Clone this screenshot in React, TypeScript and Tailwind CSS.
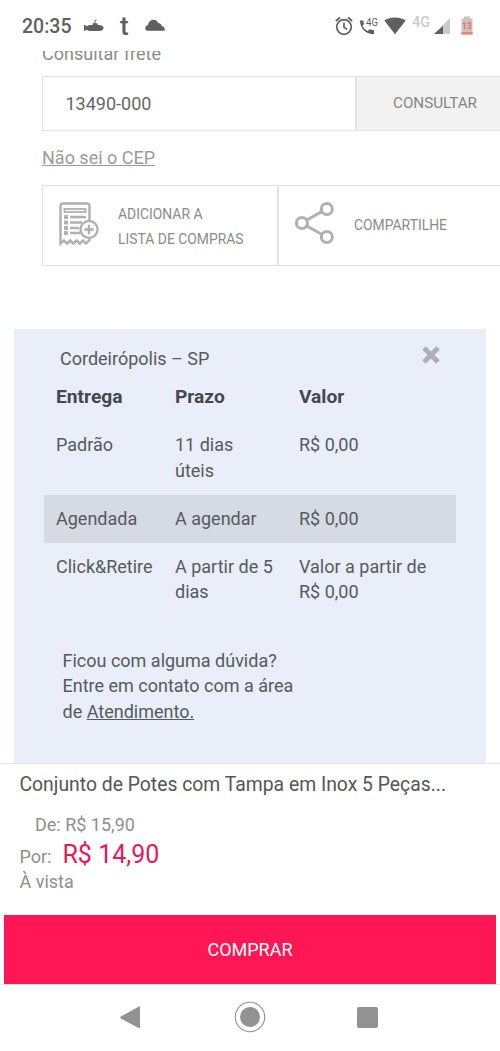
import type { ReactNode } from 'react';

interface ShippingOption {
  name: string;
  term: string;
  price: string;
  highlighted?: boolean;
}

const SHIPPING_OPTIONS: ShippingOption[] = [
  { name: 'Padrão', term: '11 dias úteis', price: 'R$ 0,00' },
  { name: 'Agendada', term: 'A agendar', price: 'R$ 0,00', highlighted: true },
  { name: 'Click&Retire', term: 'A partir de 5 dias', price: 'Valor a partir de R$ 0,00' },
];

function StatusBar() {
  return (
    <div className="flex h-[51px] shrink-0 items-center bg-white text-[#5f5f5f]">
      <span className="ml-[22px] mt-[3px] w-[62px] text-[19.5px] leading-none font-medium">20:35</span>

      {/* submarine */}
      <svg className="h-4 w-5" viewBox="0 0 20 16" fill="currentColor">
        <path d="M0 7h1.200l1.300 1.300C3.600 7.300 5.500 7 8.600 7V5.200h1.800L10.600 2.400l1.900-.9v1.100l-1 .6L11.400 5.200h2.100V7c4.200 0 6 1 6 2.900s-1.600 3-5.400 3H8c-2.800 0-4.500-.5-5.500-1.500L1.200 12.700H0z" />
      </svg>
      <span className="ml-[16px] mt-px w-[11px] text-[26px] leading-none font-medium">t</span>
      <svg className="ml-[14px] h-4 w-5" viewBox="0 0 20 16" fill="currentColor">
        <path d="M2.800 12.800C1.100 12.800.2 11.600.2 10.200S1.400 7.500 3 7.100C3.500 4 5.700 1.800 8.400 1.800c2.300 0 4 1.100 4.800 3.200 2 .2 3.100 1.200 3.600 3 1.700.5 2.900 1.500 2.900 2.900v1.900z" />
      </svg>

      <div className="ml-auto flex h-full items-center">
        {/* alarm */}
        <svg className="h-5 w-[18px]" viewBox="0 0 18 20" fill="none" stroke="currentColor" strokeWidth="1.700">
          <circle cx="9" cy="11" r="7.300" />
          <path d="M9 6.800V11.200l3.200 2.200M.8 5l4.200-3.500M17.200 5L13 1.500" />
        </svg>
        {/* call over 4G */}
        <svg className="ml-[6px] h-5 w-[20px]" viewBox="0 0 20 20" fill="currentColor">
          <path d="M1 4.600h3.300c.2 1.300.4 2.400.7 3.300L3.500 9.800c1.200 2.400 2.800 4 5.200 5.200l1.900-1.700c1 .4 2.700.7 4.400.8v4C6.500 18.600 1 12 1 4.600z" />
          <text
            x="7"
            y="10.400"
            textLength="12"
            lengthAdjust="spacingAndGlyphs"
            fontFamily="Roboto, sans-serif"
            fontSize="11.500"
          >
            4G
          </text>
        </svg>
        <svg className="ml-[5px] h-5 w-[22px]" viewBox="0 0 22 20" fill="currentColor">
          <path d="M.3 4.600C6.500.3 15.500.3 21.700 4.600L11 18.200z" />
        </svg>
        <span className="ml-[6px] mb-[4px] w-[20px] text-[14.500px] leading-none font-medium text-[#cbcbcb]">4G</span>
        <svg className="ml-[2px] h-[18px] w-[16px]" viewBox="0 0 16 18">
          <path d="M16 1v16H0z" fill="#cacaca" />
          <path d="M9 9v8H0z" fill="#5f5f5f" />
        </svg>
        <svg className="ml-[11px] mr-[27px] h-[19px] w-[12px]" viewBox="0 0 12 19">
          <path d="M3 .5h6v2h2.500v16H.5v-16H3z" fill="#cbc4c0" />
          <path d="M.5 16h11v2.500H.5z" fill="#ee8371" />
          <text
            x="6"
            y="12.800"
            textAnchor="middle"
            fontFamily="Roboto, sans-serif"
            fontSize="8.500"
            fontWeight="700"
            fill="#ee705d"
          >
            13
          </text>
        </svg>
      </div>
    </div>
  );
}

function ShoppingListIcon() {
  return (
    <svg className="mb-[4px] h-[44px] w-[40px] shrink-0" viewBox="0 0 40 44" fill="none" stroke="#b0b0b0" strokeWidth="2.400">
      <path d="M30.500 18V4q0-2.500-2.500-2.500H4Q1.500 1.500 1.500 4v37.500l3.500-3 3 3 3.200-3 3.200 3 3.200-3 3.200 3 3.200-3 3 3 3.500-3.500v-2" />
      <rect x="5.500" y="7" width="21" height="3" strokeWidth="1.800" />
      <path d="M11 15h16M11 20.500h12M11 26h9M11 31h10" />
      <path d="M5 15h4M5 20.500h4M5 26h4M5 31h4" strokeWidth="4" />
      <circle cx="30" cy="27.500" r="8.500" fill="#fff" />
      <path d="M30 22.800v9.400M25.300 27.500h9.400" />
    </svg>
  );
}

function ShareIcon() {
  return (
    <svg className="mb-[5px] h-[44px] w-[42px] shrink-0" viewBox="0 0 42 44" fill="none" stroke="#b0b0b0" strokeWidth="3">
      <path d="M11.800 19L27 10.500M11.800 25L27 33.500" />
      <circle cx="6.900" cy="22" r="5.500" />
      <circle cx="31.800" cy="8" r="5.500" />
      <circle cx="31.800" cy="36" r="5.500" />
    </svg>
  );
}

function TableRow({ children, highlighted = false }: { children: ReactNode; highlighted?: boolean }) {
  return (
    <div
      className={`grid grid-cols-[119px_124px_1fr] py-[11.25px] pl-[12px] pr-[20px] ${
        highlighted ? 'bg-[#d6dae3]' : ''
      }`}
    >
      {children}
    </div>
  );
}

function ShippingPanel() {
  return (
    <section className="mx-[14px] mt-[63px] h-[440px] bg-[#e9eef8] px-[30px] pt-[17px] text-[18px] leading-[25.5px] text-[#555a60]">
      <div className="flex h-[27px] justify-between pl-[16px] pr-[16px]">
        <span>Cordeirópolis – SP</span>
        <svg className="size-[18px]" viewBox="0 0 18 18" stroke="#b0b0b0" strokeWidth="5">
          <path d="M2 2l14 14M16 2L2 16" />
        </svg>
      </div>

      <div className="text-[19.200px] font-bold text-[#44484e]">
        <TableRow>
          <span>Entrega</span>
          <span>Prazo</span>
          <span>Valor</span>
        </TableRow>
      </div>
      {SHIPPING_OPTIONS.map((option) => (
        <TableRow key={option.name} highlighted={option.highlighted}>
          <span>{option.name}</span>
          <span className="w-[100px]">{option.term}</span>
          <span>{option.price}</span>
        </TableRow>
      ))}

      <p className="mt-[31.500px] ml-[18.500px] w-[250px]">
        Ficou com alguma dúvida?
        <br />
        Entre em contato com a área
        <br />
        de <a className="underline">Atendimento.</a>
      </p>
    </section>
  );
}

function BuyBar() {
  return (
    <footer className="h-[221px] shrink-0 border-t border-[#e2e2e2] bg-white text-[#8f8f8f]">
      <h1 className="ml-[19.500px] mt-[8px] text-[19.350px] leading-[26px] text-[#555]">
        Conjunto de Potes com Tampa em Inox 5 Peças...
      </h1>
      <p className="ml-[35px] mt-[15px] text-[18px] leading-[24px]">De: R$ 15,90</p>
      <p className="ml-[19.500px] mt-px flex items-baseline text-[18px] leading-[34px]">
        Por:
        <span className="ml-[11px] text-[25px] text-[#e8195b]">R$ 14,90</span>
      </p>
      <p className="ml-[19.500px] -mt-[3px] text-[18px] leading-[22px]">À vista</p>
      <button className="mx-[4px] mt-[22px] block h-[69px] w-[492px] bg-[#ff1654] pb-px text-[18px] text-white">
        COMPRAR
      </button>
    </footer>
  );
}

function NavigationBar() {
  return (
    <nav className="flex h-[67px] shrink-0 items-center border-t border-[#e6e6e6] bg-white pb-[2px] text-[#929292]">
      <svg className="ml-[120px] h-[23px] w-[20px]" viewBox="0 0 20 23" fill="currentColor">
        <path d="M18.500.8q1.500-.7 1.500.9v19.600q0 1.600-1.500.8L.9 12.400q-1.400-.9 0-1.800z" />
      </svg>
      <svg className="ml-[94px] size-[32px]" viewBox="0 0 32 32" fill="currentColor">
        <circle cx="16" cy="16" r="10" />
        <circle cx="16" cy="16" r="14.700" fill="none" stroke="currentColor" strokeWidth="1.100" />
      </svg>
      <div className="ml-[91px] size-[21px] rounded-[2px] bg-[#929292]" />
    </nav>
  );
}

export default function App() {
  return (
    <div className="flex h-[1051px] w-[500px] flex-col overflow-hidden bg-white font-['Roboto',sans-serif]">
      <StatusBar />

      <main className="h-[712px] shrink-0 overflow-hidden text-[#8b8b8b]">
        {/* scrolled partly under the status bar */}
        <p className="ml-[42px] -mt-[9px] text-[18px] leading-[24px]">Consultar frete</p>

        <div className="ml-[42px] mt-[10px] flex h-[55px] border border-r-0 border-[#e2e2e2]">
          <div className="flex w-[312px] items-center pl-[22.500px] text-[18px] text-[#666]">13490-000</div>
          <button className="flex-1 border-l-2 border-[#e2e2e2] bg-[#f2f2f2] pl-[13px] text-[15.200px] text-[#868686]">
            CONSULTAR
          </button>
        </div>

        <a className="ml-[42px] mt-[15px] block h-[24px] text-[18px] leading-[24px] text-[#9a9a9a] underline">
          Não sei o CEP
        </a>

        <div className="ml-[42px] mt-[15px] flex h-[81px] border border-r-0 border-[#e2e2e2] text-[13.900px]">
          <div className="flex w-[234px] items-center pl-[16px] leading-[25.500px]">
            <ShoppingListIcon />
            <span className="ml-[19px] mt-[3px]">
              ADICIONAR A
              <br />
              LISTA DE COMPRAS
            </span>
          </div>
          <div className="flex flex-1 items-center border-l-2 border-[#e2e2e2] pl-[16px]">
            <ShareIcon />
            <span className="ml-[17px]">COMPARTILHE</span>
          </div>
        </div>

        <ShippingPanel />
      </main>

      <BuyBar />
      <NavigationBar />
    </div>
  );
}
